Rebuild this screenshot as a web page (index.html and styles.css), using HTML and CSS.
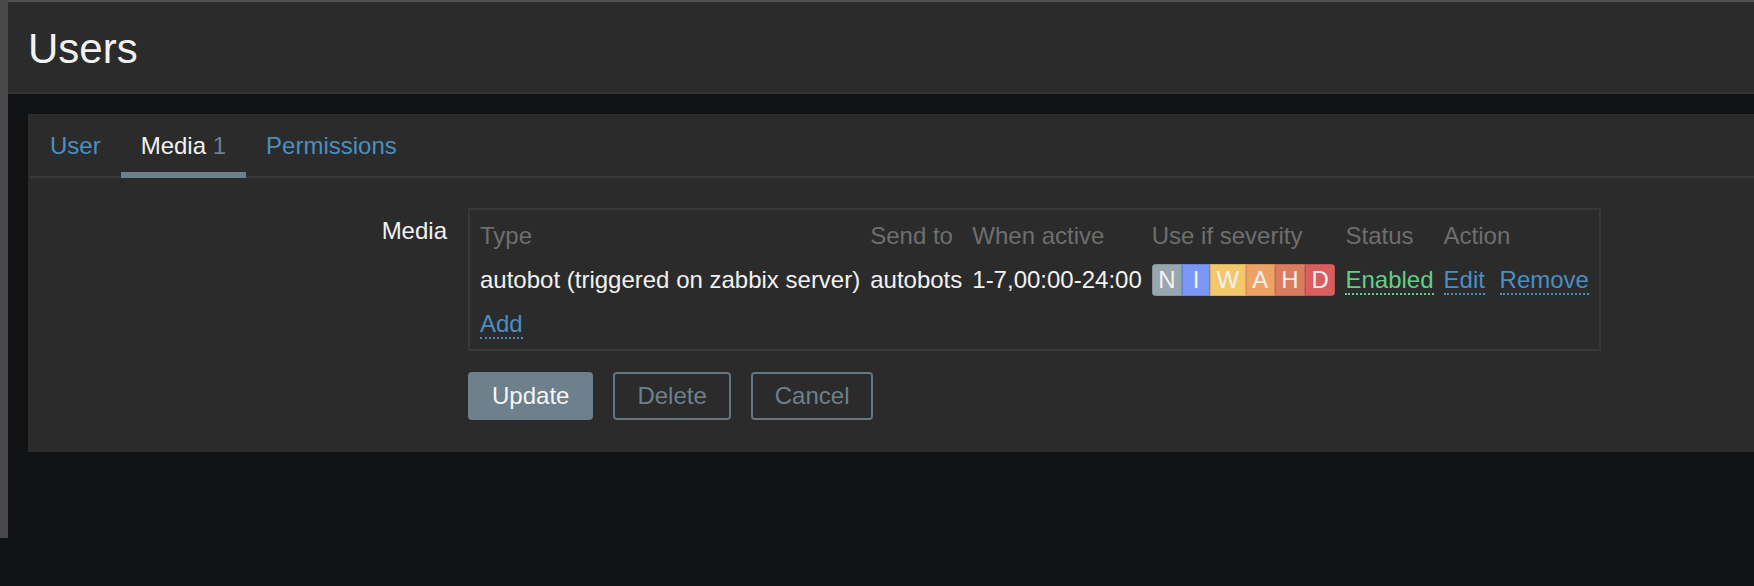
FILE: index.html
```html
<!DOCTYPE html>
<html lang="en">
<head>
<meta charset="utf-8">
<title>Users</title>
<link rel="stylesheet" href="styles.css">
</head>
<body>
<div class="app">
  <div class="edge"></div>
  <main class="main">
    <header class="page-header">
      <h1 class="page-title">Users</h1>
    </header>
    <div class="content">
      <section class="panel">
        <ul class="tabs">
          <li class="tab-item"><a class="tab" href="#">User</a></li>
          <li class="tab-item"><a class="tab tab-active" href="#">Media <span class="tab-count">1</span></a></li>
          <li class="tab-item"><a class="tab" href="#">Permissions</a></li>
        </ul>
        <form class="form">
          <div class="form-label">Media</div>
          <div class="form-field">
            <div class="media-box">
              <table class="media-table">
                <thead>
                  <tr>
                    <th>Type</th>
                    <th>Send to</th>
                    <th>When active</th>
                    <th>Use if severity</th>
                    <th>Status</th>
                    <th>Action</th>
                  </tr>
                </thead>
                <tbody>
                  <tr>
                    <td>autobot (triggered on zabbix server)</td>
                    <td>autobots</td>
                    <td>1-7,00:00-24:00</td>
                    <td>
                      <span class="severity"><span class="sev sev-n">N</span><span class="sev sev-i">I</span><span class="sev sev-w">W</span><span class="sev sev-a">A</span><span class="sev sev-h">H</span><span class="sev sev-d">D</span></span>
                    </td>
                    <td><a class="link link-green" href="#">Enabled</a></td>
                    <td><a class="link" href="#">Edit</a> <a class="link link-spaced" href="#">Remove</a></td>
                  </tr>
                  <tr>
                    <td colspan="6"><a class="link" href="#">Add</a></td>
                  </tr>
                </tbody>
              </table>
            </div>
          </div>
          <div class="form-label"></div>
          <div class="form-buttons">
            <button type="button" class="btn btn-primary">Update</button>
            <button type="button" class="btn btn-alt">Delete</button>
            <button type="button" class="btn btn-alt">Cancel</button>
          </div>
        </form>
      </section>
    </div>
  </main>
</div>
</body>
</html>
```

FILE: styles.css
```css
html, body {
  margin: 0;
  padding: 0;
  height: 100%;
}

body {
  background: #111214;
  color: #f2f2f2;
  font-family: "Liberation Sans", Arial, sans-serif;
  font-size: 24px;
  overflow: hidden;
}

.app {
  display: flex;
  align-items: flex-start;
  height: 586px;
}

.edge {
  width: 8px;
  height: 538px;
  background: #48484b;
  flex: none;
}

.main {
  flex: 1;
  min-width: 0;
  border-top: 2px solid #515154;
}

.page-header {
  box-sizing: border-box;
  height: 92px;
  background: #2b2b2b;
  border-bottom: 2px solid #333333;
  padding: 23px 0 0 20px;
}

.page-title {
  margin: 0;
  font-size: 42px;
  line-height: 48px;
  font-weight: normal;
  color: #f2f2f2;
}

.content {
  padding: 20px 0 0 20px;
}

.panel {
  background: #2b2b2b;
}

.tabs {
  list-style: none;
  margin: 0 0 0 2px;
  padding: 0;
  display: flex;
  border-bottom: 2px solid #383838;
}

.tab-item {
  margin-bottom: -2px;
}

.tab {
  display: block;
  padding: 18px 20px 12px;
  line-height: 28px;
  color: #4a8fc2;
  text-decoration: none;
  border-bottom: 6px solid transparent;
}

.tab-active {
  color: #f2f2f2;
  border-bottom-color: #6d808c;
}

.tab-count {
  color: #6d808c;
}

.form {
  display: grid;
  grid-template-columns: 419px auto;
  justify-content: start;
  align-items: start;
  column-gap: 21px;
  row-gap: 21px;
  padding: 30px 0 32px 0;
  margin: 0;
}

.form-label {
  text-align: right;
  line-height: 28px;
  padding-top: 9px;
  color: #f2f2f2;
}

.form-field {
  display: flex;
}

.media-box {
  display: block;
  border: 2px solid #383838;
  padding: 4px 5px 3px;
}

.media-table {
  border-collapse: collapse;
  border-spacing: 0;
}

.media-table th,
.media-table td {
  padding: 6px 5px;
  line-height: 32px;
  text-align: left;
  white-space: nowrap;
  vertical-align: baseline;
}

.media-table th {
  font-weight: normal;
  color: #6e6e6e;
}

.link {
  color: #4a8fc2;
  text-decoration: none;
  border-bottom: 2px dotted #4a8fc2;
}

.link-green {
  color: #62cf88;
  border-bottom-color: #62cf88;
}

.link-spaced {
  margin-left: 8px;
}

.severity {
  display: inline-flex;
  height: 32px;
  border-radius: 4px;
  overflow: hidden;
  vertical-align: baseline;
}

.sev {
  display: block;
  box-sizing: border-box;
  min-width: 28px;
  padding: 0 6.5px;
  line-height: 32px;
  text-align: center;
  color: #f2f2f2;
  box-shadow: inset 0 0 0 1px rgba(0, 0, 0, 0.12);
}

.sev-n { background: #98a6ae; }
.sev-i { background: #7a97f5; }
.sev-w { background: #f4c76b; }
.sev-a { background: #efa263; }
.sev-h { background: #dc7c5e; }
.sev-d { background: #d95e5d; }

.form-buttons {
  display: flex;
  gap: 20px;
}

.btn {
  height: 48px;
  box-sizing: border-box;
  padding: 0 22px;
  border: 2px solid #6d808c;
  border-radius: 4px;
  font-family: "Liberation Sans", Arial, sans-serif;
  font-size: 24px;
  line-height: 44px;
  cursor: pointer;
}

.btn-primary {
  background: #6d808c;
  color: #f6f6f6;
}

.btn-alt {
  background: transparent;
  color: #6d808c;
  border-color: #63767f;
}
```
